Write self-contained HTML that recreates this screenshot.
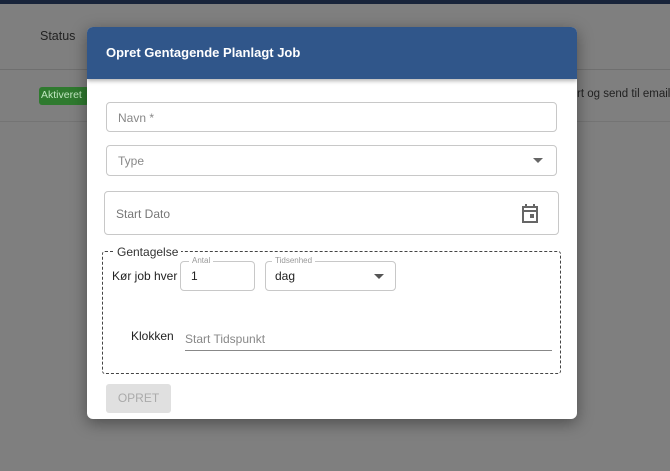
<!DOCTYPE html>
<html><head><style>
*{box-sizing:border-box;margin:0;padding:0}
body{width:670px;height:471px;overflow:hidden;background:#7f7f7f;font-family:"Liberation Sans",sans-serif;position:relative;font-size:12px}
.a{position:absolute}
.box{position:absolute;border:1px solid #c8c8c8;border-radius:4px;background:#fff}
.ph{color:#888;font-size:12px;position:absolute}
</style></head><body>
<div class="a" style="left:0;top:0;width:670px;height:4px;background:#18243a"></div>
<div class="a" style="left:0;top:69px;width:670px;height:1px;background:#6f6f6f"></div>
<div class="a" style="left:0;top:121px;width:670px;height:1px;background:#747474"></div>
<div class="a" style="left:40px;top:29px;color:#222;font-size:12.5px">Status</div>
<div class="a" style="left:39px;top:87px;width:50px;height:18px;background:#2f7a2f;border-radius:3px;color:#bfe6bf;font-size:10.5px;padding:2px 2px">Aktiveret</div>
<div class="a" style="left:577px;top:88px;color:#222;font-size:11.5px;white-space:nowrap">rt og send til email</div>

<div class="a" style="left:87px;top:27px;width:490px;height:392px;background:#fff;border-radius:6px;overflow:hidden;box-shadow:0 4px 16px rgba(0,0,0,.4)">
 <div class="a" style="left:0;top:0;width:490px;height:52px;background:#30568a;box-shadow:0 2px 4px rgba(0,0,0,.3)"></div>
 <div class="a" style="left:19px;top:18px;color:#fff;font-size:13px;font-weight:bold">Opret Gentagende Planlagt Job</div>

 <div class="box" style="left:19px;top:75px;width:451px;height:30px"><span class="ph" style="left:11px;top:8px">Navn *</span></div>
 <div class="box" style="left:19px;top:118px;width:451px;height:31px"><span class="ph" style="left:11px;top:8px">Type</span>
  <svg class="a" style="left:426px;top:12px" width="10" height="6"><path d="M0 0h10L5 5z" fill="#666"/></svg></div>
 <div class="box" style="left:17px;top:164px;width:455px;height:44px"><span class="ph" style="left:11px;top:15px;color:#777">Start Dato</span>
  <svg class="a" style="left:416px;top:12px" width="18" height="19" viewBox="0 0 18 19"><path d="M2 3h14v15H2z M2 3v4h14" fill="none" stroke="#666" stroke-width="2"/><rect x="4" y="0" width="2" height="4" fill="#666"/><rect x="12" y="0" width="2" height="4" fill="#666"/><rect x="9" y="10" width="4" height="4" fill="#666"/></svg></div>

 <div class="a" style="left:15px;top:224px;width:459px;height:123px;border:1px dashed #444;border-radius:3px"></div>
 <div class="a" style="left:27px;top:218px;background:#fff;padding:0 3px;color:#333;font-size:12px">Gentagelse</div>
 <div class="a" style="left:25px;top:242px;color:#222;font-size:12px">Kør job hver</div>
 <div class="box" style="left:93px;top:234px;width:75px;height:30px"><span class="a" style="left:10px;top:7px;color:#222;font-size:12px">1</span></div>
 <div class="a" style="left:102px;top:229px;background:#fff;padding:0 3px;color:#999;font-size:8px">Antal</div>
 <div class="box" style="left:178px;top:234px;width:131px;height:30px"><span class="a" style="left:9px;top:7px;color:#222;font-size:12px">dag</span>
  <svg class="a" style="left:108px;top:12px" width="10" height="6"><path d="M0 0h10L5 5z" fill="#555"/></svg></div>
 <div class="a" style="left:185px;top:229px;background:#fff;padding:0 3px;color:#999;font-size:8px">Tidsenhed</div>
 <div class="a" style="left:44px;top:302px;color:#222;font-size:12px">Klokken</div>
 <div class="a" style="left:98px;top:305px;color:#888;font-size:12px">Start Tidspunkt</div>
 <div class="a" style="left:98px;top:323px;width:367px;height:1px;background:#888"></div>

 <div class="a" style="left:19px;top:357px;width:65px;height:29px;background:#e0e0e0;border-radius:3px;color:#aaa;font-size:12px;text-align:center;line-height:29px">OPRET</div>
</div>
</body></html>
